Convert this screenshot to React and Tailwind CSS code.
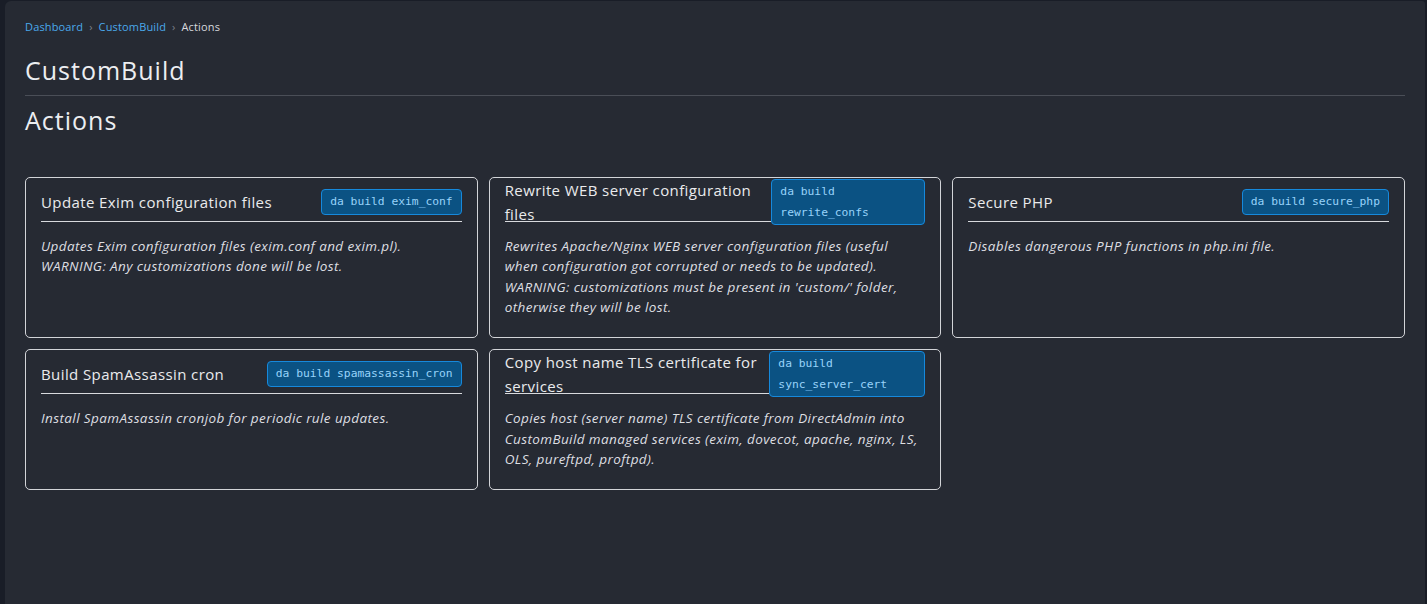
import React from 'react';

const actions = [
  {
    title: 'Update Exim configuration files',
    cmd: 'da build exim_conf',
    text: 'Updates Exim configuration files (exim.conf and exim.pl).',
    warning: 'WARNING: Any customizations done will be lost.',
  },
  {
    title: 'Rewrite WEB server configuration files',
    cmd: 'da build rewrite_confs',
    wrap: 'w-[154px]',
    text: 'Rewrites Apache/Nginx WEB server configuration files (useful when configuration got corrupted or needs to be updated).',
    warning: "WARNING: customizations must be present in 'custom/' folder, otherwise they will be lost.",
  },
  {
    title: 'Secure PHP',
    cmd: 'da build secure_php',
    text: 'Disables dangerous PHP functions in php.ini file.',
  },
  {
    title: 'Build SpamAssassin cron',
    cmd: 'da build spamassassin_cron',
    text: 'Install SpamAssassin cronjob for periodic rule updates.',
  },
  {
    title: 'Copy host name TLS certificate for services',
    cmd: 'da build sync_server_cert',
    wrap: 'w-[156px]',
    text: 'Copies host (server name) TLS certificate from DirectAdmin into CustomBuild managed services (exim, dovecot, apache, nginx, LS, OLS, pureftpd, proftpd).',
  },
];

function Badge({ cmd, wrap }) {
  return (
    <code
      className={`shrink-0 rounded-[4px] border border-[#1689dc] bg-[#0b5283] px-2 font-['DejaVu_Sans_Mono',monospace] text-[11.3px] text-[#98d2fa] ${
        wrap ? wrap + ' py-[1px] leading-[21px]' : 'py-[2px] leading-[20px] whitespace-nowrap'
      }`}
    >
      {cmd}
    </code>
  );
}

function ActionCard({ action }) {
  const wrapped = Boolean(action.wrap);
  return (
    <div className="rounded-[5px] border border-[#d2d4d8] px-[15px] pt-[4px] pb-5">
      <div className={`flex h-[40px] items-center ${wrapped ? '' : 'border-b border-[#d8dade]'}`}>
        <div
          className={`flex min-w-0 flex-1 items-center self-stretch ${
            wrapped ? 'border-b border-[#d8dade]' : ''
          }`}
        >
          <h3 className="pr-3 text-[15px] font-medium leading-[24px] tracking-[0.4px] text-[#eaebed]">
            {action.title}
          </h3>
        </div>
        <Badge cmd={action.cmd} wrap={action.wrap} />
      </div>
      <p className="mt-[14px] text-[13.5px] italic leading-[20.33px] tracking-[0.4px] text-[#dedfe2]">
        {action.text}
        {action.warning && (
          <>
            <br />
            {action.warning}
          </>
        )}
      </p>
    </div>
  );
}

export default function App() {
  return (
    <div className="min-h-screen bg-[#191d27] pl-[5px] pr-[2px] pt-[1px] font-['Open_Sans',sans-serif]">
      <div className="min-h-[603px] rounded-tl-[6px] rounded-tr-[3px] bg-[#262a33] px-5 pt-[18px]">
        <nav className="flex items-center gap-[6px] text-[11px] leading-4 tracking-[0.15px]">
          <span className="text-[#4aa9ec]">Dashboard</span>
          <span className="text-[#7d828b]">›</span>
          <span className="text-[#4aa9ec]">CustomBuild</span>
          <span className="text-[#7d828b]">›</span>
          <span className="text-[#d7d9dd]">Actions</span>
        </nav>

        <h1 className="mt-[21px] text-[25px] leading-[29px] tracking-[1px] text-[#eceef1]">CustomBuild</h1>
        <hr className="mt-[10px] border-[#4a4e57]" />
        <h2 className="mt-[10px] text-[25px] leading-[29px] tracking-[1px] text-[#eceef1]">Actions</h2>

        <div className="mt-[42px] grid grid-cols-3 gap-[11px]">
          {actions.map((a) => (
            <ActionCard key={a.cmd} action={a} />
          ))}
        </div>
      </div>
    </div>
  );
}
